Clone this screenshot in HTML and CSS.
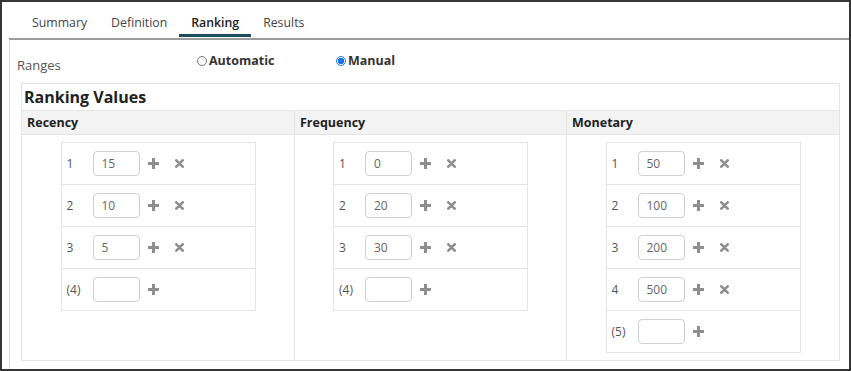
FILE: index.html
```html
<!DOCTYPE html>
<html>
<head>
<meta charset="utf-8">
<link rel="stylesheet" href="styles.css">
</head>
<body>
<div class="frame">
  <div class="tabs">
    <div class="tab">Summary</div>
    <div class="tab">Definition</div>
    <div class="tab active">Ranking</div>
    <div class="tab">Results</div>
  </div>
  <div class="panel">
    <div class="ranges">
      <div class="ranges-label">Ranges</div>
      <label class="opt opt-auto"><span class="radio"></span>Automatic</label>
      <label class="opt"><span class="radio checked"></span>Manual</label>
    </div>
    <div class="box">
      <div class="box-title">Ranking Values</div>
      <div class="cols">
        <div class="col-head">Recency</div>
        <div class="col-head">Frequency</div>
        <div class="col-head">Monetary</div>

        <div class="col-body">
          <div class="vt">
            <div class="vr"><span class="num">1</span><span class="inp">15</span><svg class="plus" viewBox="0 0 11 11"><rect x="4" y="0" width="3" height="11"/><rect x="0" y="4" width="11" height="3"/></svg><svg class="cross" viewBox="0 0 9 9"><path d="M1.3 1.3L7.7 7.7M7.7 1.3L1.3 7.7"/></svg></div>
            <div class="vr"><span class="num">2</span><span class="inp">10</span><svg class="plus" viewBox="0 0 11 11"><rect x="4" y="0" width="3" height="11"/><rect x="0" y="4" width="11" height="3"/></svg><svg class="cross" viewBox="0 0 9 9"><path d="M1.3 1.3L7.7 7.7M7.7 1.3L1.3 7.7"/></svg></div>
            <div class="vr"><span class="num">3</span><span class="inp">5</span><svg class="plus" viewBox="0 0 11 11"><rect x="4" y="0" width="3" height="11"/><rect x="0" y="4" width="11" height="3"/></svg><svg class="cross" viewBox="0 0 9 9"><path d="M1.3 1.3L7.7 7.7M7.7 1.3L1.3 7.7"/></svg></div>
            <div class="vr"><span class="num">(4)</span><span class="inp"></span><svg class="plus" viewBox="0 0 11 11"><rect x="4" y="0" width="3" height="11"/><rect x="0" y="4" width="11" height="3"/></svg></div>
          </div>
        </div>

        <div class="col-body">
          <div class="vt">
            <div class="vr"><span class="num">1</span><span class="inp">0</span><svg class="plus" viewBox="0 0 11 11"><rect x="4" y="0" width="3" height="11"/><rect x="0" y="4" width="11" height="3"/></svg><svg class="cross" viewBox="0 0 9 9"><path d="M1.3 1.3L7.7 7.7M7.7 1.3L1.3 7.7"/></svg></div>
            <div class="vr"><span class="num">2</span><span class="inp">20</span><svg class="plus" viewBox="0 0 11 11"><rect x="4" y="0" width="3" height="11"/><rect x="0" y="4" width="11" height="3"/></svg><svg class="cross" viewBox="0 0 9 9"><path d="M1.3 1.3L7.7 7.7M7.7 1.3L1.3 7.7"/></svg></div>
            <div class="vr"><span class="num">3</span><span class="inp">30</span><svg class="plus" viewBox="0 0 11 11"><rect x="4" y="0" width="3" height="11"/><rect x="0" y="4" width="11" height="3"/></svg><svg class="cross" viewBox="0 0 9 9"><path d="M1.3 1.3L7.7 7.7M7.7 1.3L1.3 7.7"/></svg></div>
            <div class="vr"><span class="num">(4)</span><span class="inp"></span><svg class="plus" viewBox="0 0 11 11"><rect x="4" y="0" width="3" height="11"/><rect x="0" y="4" width="11" height="3"/></svg></div>
          </div>
        </div>

        <div class="col-body">
          <div class="vt">
            <div class="vr"><span class="num">1</span><span class="inp">50</span><svg class="plus" viewBox="0 0 11 11"><rect x="4" y="0" width="3" height="11"/><rect x="0" y="4" width="11" height="3"/></svg><svg class="cross" viewBox="0 0 9 9"><path d="M1.3 1.3L7.7 7.7M7.7 1.3L1.3 7.7"/></svg></div>
            <div class="vr"><span class="num">2</span><span class="inp">100</span><svg class="plus" viewBox="0 0 11 11"><rect x="4" y="0" width="3" height="11"/><rect x="0" y="4" width="11" height="3"/></svg><svg class="cross" viewBox="0 0 9 9"><path d="M1.3 1.3L7.7 7.7M7.7 1.3L1.3 7.7"/></svg></div>
            <div class="vr"><span class="num">3</span><span class="inp">200</span><svg class="plus" viewBox="0 0 11 11"><rect x="4" y="0" width="3" height="11"/><rect x="0" y="4" width="11" height="3"/></svg><svg class="cross" viewBox="0 0 9 9"><path d="M1.3 1.3L7.7 7.7M7.7 1.3L1.3 7.7"/></svg></div>
            <div class="vr"><span class="num">4</span><span class="inp">500</span><svg class="plus" viewBox="0 0 11 11"><rect x="4" y="0" width="3" height="11"/><rect x="0" y="4" width="11" height="3"/></svg><svg class="cross" viewBox="0 0 9 9"><path d="M1.3 1.3L7.7 7.7M7.7 1.3L1.3 7.7"/></svg></div>
            <div class="vr"><span class="num">(5)</span><span class="inp"></span><svg class="plus" viewBox="0 0 11 11"><rect x="4" y="0" width="3" height="11"/><rect x="0" y="4" width="11" height="3"/></svg></div>
          </div>
        </div>
      </div>
    </div>
  </div>
</div>
</body>
</html>
```

FILE: styles.css
```css
* { box-sizing: border-box; }
html, body { margin: 0; padding: 0; background: #fff; }
body { font-family: "Open Sans", "DejaVu Sans", sans-serif; color: #333; }

.frame {
  width: 851px;
  height: 371px;
  border: 2px solid #353535;
  display: flex;
  flex-direction: column;
  overflow: hidden;
}

.tabs {
  display: flex;
  margin-left: 7px;
  padding-left: 11px;
  border-bottom: 2px solid #9c9c9c;
}
.tab {
  padding: 13px 12px 3px;
  line-height: 16px;
  font-size: 12.3px;
  color: #444;
  border-bottom: 3px solid transparent;
  margin-bottom: 1px;
}
.tab.active {
  font-weight: 600;
  color: #222;
  border-bottom-color: #1d4d5b;
}

.panel {
  flex: 1;
  margin-left: 7px;
  border-left: 1px solid #dcdcdc;
  padding: 12px 9px 0 11px;
}

.ranges {
  display: flex;
  align-items: flex-start;
  margin-left: -4px;
  height: 31px;
}
.ranges-label {
  width: 180px;
  padding-top: 4px;
  line-height: 18px;
  font-size: 13px;
  color: #555;
}
.opt {
  display: flex;
  align-items: center;
  line-height: 18px;
  font-size: 12.5px;
  font-weight: 700;
  color: #333;
}
.opt-auto { width: 139px; }
.radio {
  width: 10px;
  height: 10px;
  border-radius: 50%;
  border: 1px solid #777;
  margin-right: 2px;
  background: #fff;
}
.radio.checked {
  border-color: #1a73e8;
  background: radial-gradient(circle, #1a73e8 0 3px, #fff 3.5px);
}

.box {
  border: 1px solid #e4e4e4;
}
.box-title {
  height: 26px;
  line-height: 26px;
  padding-left: 2px;
  font-size: 16px;
  font-weight: 700;
  color: #222;
}
.cols {
  display: grid;
  grid-template-columns: 272px 272px 1fr;
}
.col-head {
  height: 25px;
  line-height: 23px;
  padding-left: 5px;
  background: #f3f3f3;
  border-top: 1px solid #e4e4e4;
  border-bottom: 1px solid #e4e4e4;
  font-size: 12.5px;
  font-weight: 700;
  color: #222;
}
.col-head + .col-head { border-left: 1px solid #e4e4e4; }
.col-body {
  padding: 7px 0;
  display: flex;
  justify-content: center;
  align-items: flex-start;
}
.col-body + .col-body { border-left: 1px solid #e4e4e4; }

.vt {
  width: 195px;
  border: 1px solid #e4e4e4;
}
.vr {
  display: flex;
  align-items: center;
  height: 42px;
  border-bottom: 1px solid #e4e4e4;
  padding-left: 5px;
}
.vr:last-child { border-bottom: 0; height: 41px; }
.num {
  width: 26px;
  font-size: 12px;
  color: #555;
}
.inp {
  width: 47px;
  height: 25px;
  border: 1px solid #cfcfcf;
  border-radius: 4px;
  padding-left: 8px;
  line-height: 23px;
  font-size: 12px;
  color: #666;
}
.plus {
  width: 11px;
  height: 11px;
  margin-left: 8px;
  fill: #8e8e8e;
}
.cross {
  width: 9px;
  height: 9px;
  margin-left: 16px;
  fill: none;
  stroke: #8e8e8e;
  stroke-width: 2.6;
  stroke-linecap: round;
}
```
